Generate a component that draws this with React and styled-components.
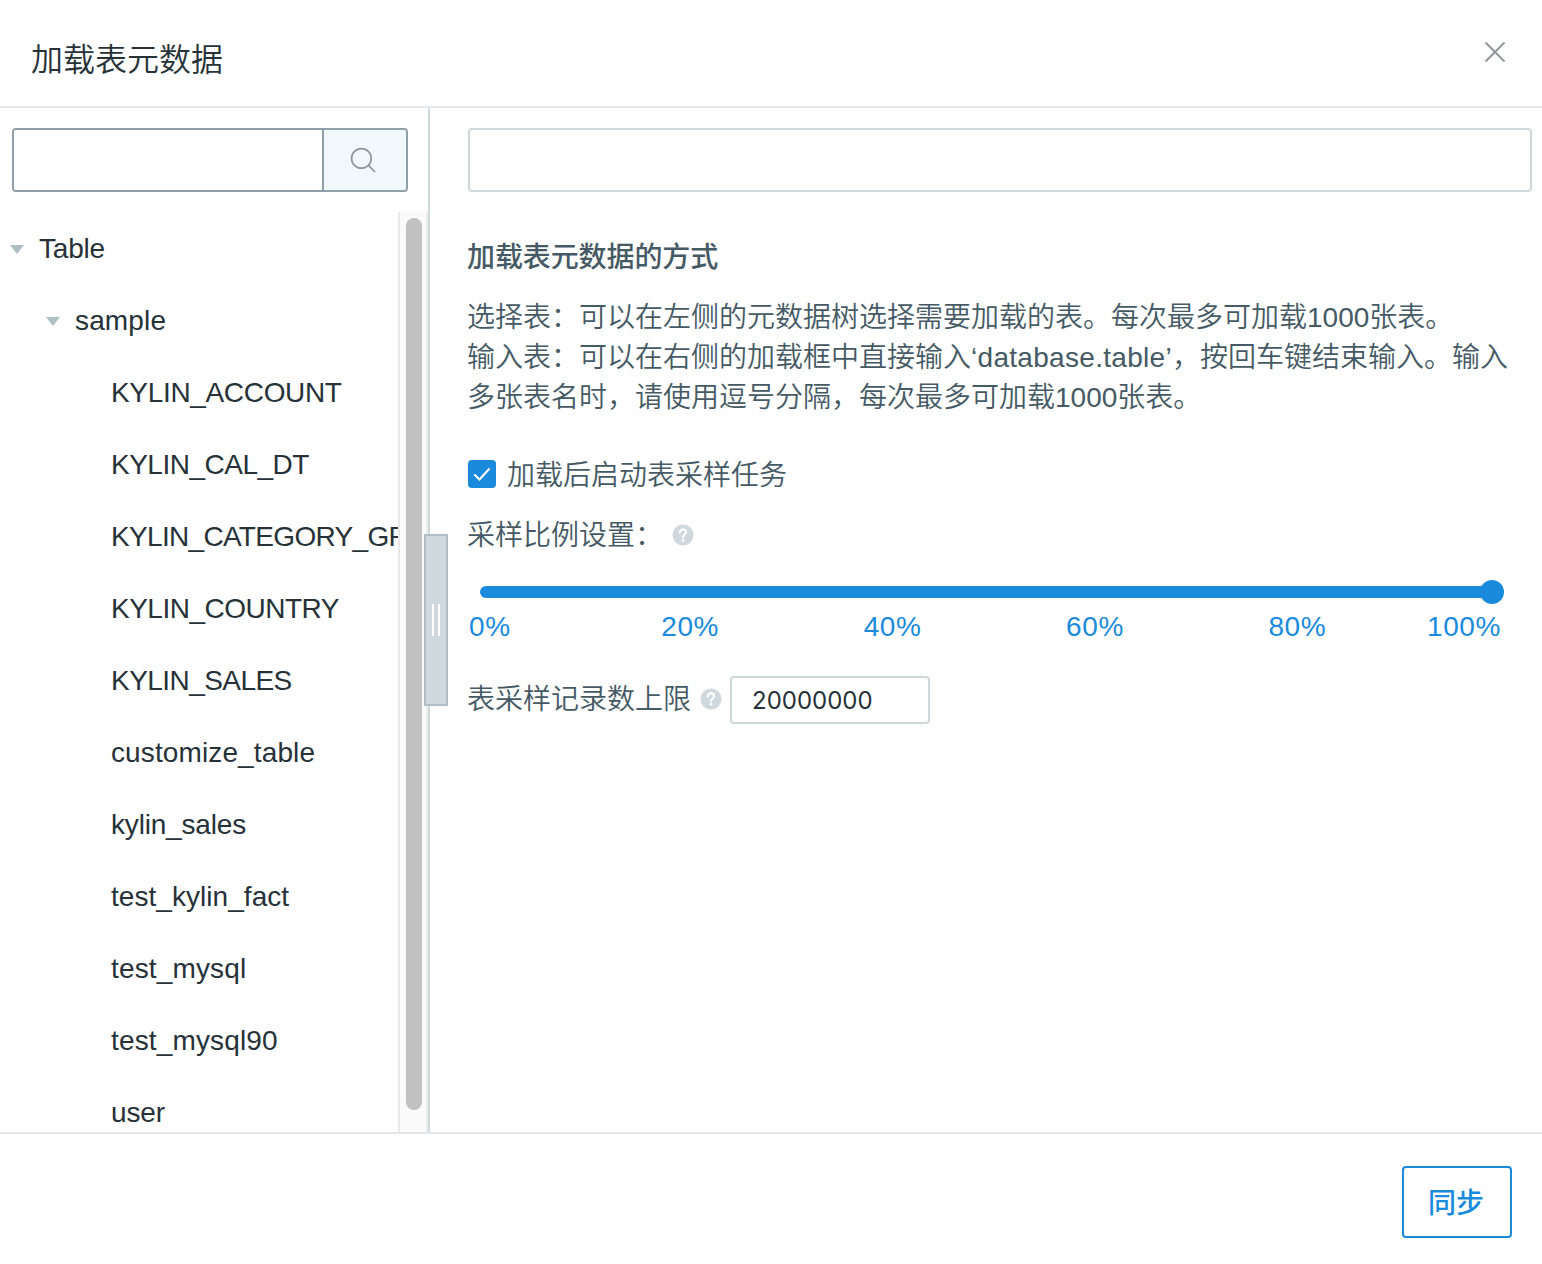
import React, { useState } from "react";
import styled, { createGlobalStyle } from "styled-components";

const BLUE = "#1a8bdc";

const GlobalStyle = createGlobalStyle`
  * { box-sizing: border-box; }
  body {
    margin: 0;
    background: #fefefe;
    color: #263238;
    font-family: "Liberation Sans", "Noto Sans CJK SC", sans-serif;
    font-size: 28px;
  }
  input, button { font: inherit; }
`;

const Dialog = styled.div`
  display: flex;
  flex-direction: column;
  width: 1542px;
  height: 1264px;
  overflow: hidden;
  background: #fefefe;
`;

const Header = styled.header`
  display: flex;
  align-items: center;
  justify-content: space-between;
  height: 108px;
  padding: 0 36px 0 31px;
  border-bottom: 2px solid #e4e9ed;
`;

const Title = styled.h1`
  margin: 13px 0 0;
  font-size: 32px;
  font-weight: 350;
  line-height: 48px;
`;

const CloseButton = styled.button`
  display: flex;
  margin: 0 0 2px;
  padding: 0;
  border: 0;
  background: none;
  color: #909399;
`;

const Body = styled.div`
  display: flex;
  height: 1024px;
`;

const Sidebar = styled.aside`
  position: relative;
  display: flex;
  flex-direction: column;
  flex: none;
  width: 430px;
  padding-top: 20px;
  border-right: 2px solid #cfd8dc;
`;

const SearchBox = styled.div`
  display: flex;
  flex: none;
  width: 396px;
  height: 64px;
  margin: 0 0 20px 12px;
  border: 2px solid #8e9fa8;
  border-radius: 4px;
  overflow: hidden;
`;

const SearchInput = styled.input`
  flex: 1;
  min-width: 0;
  padding: 0 20px;
  border: 0;
  outline: 0;
  background: #fff;
`;

const SearchButton = styled.button`
  display: flex;
  align-items: center;
  justify-content: center;
  width: 84px;
  padding: 0 4px 0 0;
  border: 0;
  border-left: 2px solid #8e9fa8;
  background: #f2f7fb;
  color: #919499;
`;

const TreeScroll = styled.div`
  display: flex;
  height: 920px;
`;

const Tree = styled.ul`
  flex: none;
  width: 398px;
  margin: 0;
  padding: 0;
  overflow: hidden;
  list-style: none;
`;

const TreeRow = styled.li`
  display: flex;
  align-items: center;
  height: 72px;
  padding: 2px 0 0 ${(p) => 10 + p.$level * 36}px;
  letter-spacing: ${(p) => p.$spacing || 0}px;
  line-height: 70px;
  white-space: nowrap;
`;

const Caret = styled.span`
  width: 14px;
  height: 0;
  margin: 0 15px 0 0;
  border: solid transparent;
  border-width: 9px 7px 0;
  border-top-color: ${(p) => (p.$leaf ? "transparent" : "#b0bec5")};
`;

const ScrollTrack = styled.div`
  width: 30px;
  padding: 6px 4px 0 6px;
  border: solid #e8e8e8;
  border-width: 0 2px;
  border-right-color: #ededed;
  background: #fafafa;
`;

const ScrollThumb = styled.div`
  width: 16px;
  height: 892px;
  border-radius: 8px;
  background: #c1c1c1;
`;

const Splitter = styled.div`
  position: absolute;
  top: 426px;
  right: -20px;
  display: flex;
  align-items: center;
  justify-content: center;
  gap: 4px;
  width: 24px;
  height: 172px;
  border: 2px solid #b0bec5;
  background: #cfd8dc;
`;

const Grip = styled.span`
  width: 2px;
  height: 32px;
  background: #fff;
`;

const Main = styled.main`
  flex: 1;
  min-width: 0;
  padding: 20px 10px 0 38px;
  color: #455a64;
  font-weight: 350;
`;

const TableInput = styled.input`
  display: block;
  width: 100%;
  height: 64px;
  padding: 0 20px;
  border: 2px solid #cfd8dc;
  border-radius: 4px;
  outline: 0;
  background: #fff;
`;

const Subtitle = styled.h2`
  margin: 46px 0 20px -1px;
  font-size: 28px;
  font-weight: 500;
  line-height: 40px;
  letter-spacing: -0.1px;
`;

const Help = styled.p`
  margin: 0 0 0 -1px;
  line-height: 40px;
  white-space: nowrap;
`;

const Latin = styled.span`
  letter-spacing: ${(p) => p.$spacing}px;
`;

const CheckRow = styled.label`
  display: flex;
  align-items: center;
  gap: 11px;
  height: 40px;
  margin-top: 36px;
`;

const LabelText = styled.span`
  margin-top: ${(p) => p.$drop}px;
  line-height: 36px;
`;

const Checkbox = styled.span`
  display: flex;
  align-items: center;
  justify-content: center;
  width: 28px;
  height: 28px;
  border-radius: 4px;
  background: ${BLUE};
`;

const FieldLabel = styled.div`
  display: flex;
  align-items: center;
  gap: 9px;
  height: 40px;
  margin-left: -1px;
`;

const RatioField = styled(FieldLabel)`
  margin-top: 21px;
`;

const Slider = styled.div`
  display: flex;
  align-items: center;
  height: 24px;
  margin: 25px 28px 0 12px;
`;

const Rail = styled.div`
  flex: 1;
  height: 12px;
  margin-right: -12px;
  border-radius: 6px;
  background: ${BLUE};
`;

const Knob = styled.div`
  width: 24px;
  height: 24px;
  border-radius: 50%;
  background: ${BLUE};
`;

const Marks = styled.div`
  display: grid;
  grid-template-columns: 120px repeat(4, 202.4px) 1fr;
  margin: 3px 31px 0 1px;
  color: ${BLUE};
  font-weight: 400;
  line-height: 40px;
  letter-spacing: 0.6px;
  text-align: center;
  white-space: nowrap;
`;

const Mark = styled.span`
  justify-self: ${(p) => p.$align || "center"};
`;

const LimitRow = styled.div`
  display: flex;
  align-items: center;
  gap: 8px;
  margin-top: 29px;
`;

const LimitField = styled(FieldLabel)`
  margin-bottom: 2px;
`;

const LimitInput = styled.input`
  width: 200px;
  height: 48px;
  padding: 0 20px;
  border: 2px solid #cfd8dc;
  border-radius: 4px;
  outline: 0;
  background: #fff;
  color: #263238;
  font-family: Inter, sans-serif;
  font-size: 24px;
  font-weight: 400;
`;

const Footer = styled.footer`
  display: flex;
  justify-content: flex-end;
  height: 132px;
  padding: 32px 30px 0;
  border-top: 2px solid #e0e6ec;
`;

const SyncButton = styled.button`
  width: 110px;
  height: 72px;
  padding: 0 2px 2px 0;
  border: 2px solid ${BLUE};
  border-radius: 4px;
  background: #fff;
  color: ${BLUE};
  font-weight: 500;
`;

const CloseIcon = () => (
  <svg width="22" height="22" viewBox="0 0 22 22" fill="none" stroke="currentColor" strokeWidth="1.8">
    <path d="M1.5 1.5 20.5 20.5M20.5 1.5 1.5 20.5" />
  </svg>
);

const SearchIcon = () => (
  <svg width="26" height="26" viewBox="0 0 26 26" fill="none" stroke="currentColor" strokeWidth="1.7">
    <circle cx="11.4" cy="11.4" r="9.8" />
    <path d="M18.2 18.2 25 25" />
  </svg>
);

const CheckIcon = () => (
  <svg width="28" height="28" viewBox="0 0 28 28" fill="none" stroke="#fff" strokeWidth="2">
    <path d="M6.3 14.5 11.5 19.5 21.5 8.5" />
  </svg>
);

const HelpIcon = () => (
  <svg width="22" height="22" viewBox="0 0 22 22" fill="none">
    <circle cx="11" cy="11" r="10.5" fill="#cfd8dc" />
    <path
      d="M7.9 8.5C7.9 6.6 9.2 5.4 11 5.4s3.1 1.2 3.1 2.9c0 2-3.1 2.4-3.1 4.5v.5"
      stroke="#fff"
      strokeWidth="2.2"
      strokeLinecap="round"
    />
    <circle cx="11" cy="16.3" r="1.4" fill="#fff" />
  </svg>
);

const treeItems = [
  { name: "Table", level: 0, spacing: -0.2 },
  { name: "sample", level: 1, spacing: 0.15 },
  { name: "KYLIN_ACCOUNT", level: 2, leaf: true, spacing: -0.33 },
  { name: "KYLIN_CAL_DT", level: 2, leaf: true, spacing: -0.5 },
  { name: "KYLIN_CATEGORY_GROUPINGS", level: 2, leaf: true, spacing: -0.68 },
  { name: "KYLIN_COUNTRY", level: 2, leaf: true, spacing: -0.5 },
  { name: "KYLIN_SALES", level: 2, leaf: true, spacing: -0.55 },
  { name: "customize_table", level: 2, leaf: true, spacing: 0.12 },
  { name: "kylin_sales", level: 2, leaf: true, spacing: -0.18 },
  { name: "test_kylin_fact", level: 2, leaf: true, spacing: 0.05 },
  { name: "test_mysql", level: 2, leaf: true, spacing: 0.15 },
  { name: "test_mysql90", level: 2, leaf: true, spacing: 0.15 },
  { name: "user", level: 2, leaf: true, spacing: -0.15 },
];

const marks = ["0%", "20%", "40%", "60%", "80%", "100%"];
const markAlign = { "0%": "start", "100%": "end" };

export default function App() {
  const [limit, setLimit] = useState("20000000");
  return (
    <>
      <GlobalStyle />
      <Dialog>
        <Header>
          <Title>加载表元数据</Title>
          <CloseButton aria-label="close"><CloseIcon /></CloseButton>
        </Header>
        <Body>
          <Sidebar>
            <SearchBox>
              <SearchInput />
              <SearchButton aria-label="search"><SearchIcon /></SearchButton>
            </SearchBox>
            <TreeScroll>
              <Tree>
                {treeItems.map((item) => (
                  <TreeRow key={item.name} $level={item.level} $spacing={item.spacing}>
                    <Caret $leaf={item.leaf} />
                    {item.name}
                  </TreeRow>
                ))}
              </Tree>
              <ScrollTrack><ScrollThumb /></ScrollTrack>
            </TreeScroll>
            <Splitter><Grip /><Grip /></Splitter>
          </Sidebar>
          <Main>
            <TableInput />
            <Subtitle>加载表元数据的方式</Subtitle>
            <Help>
              选择表：可以在左侧的元数据树选择需要加载的表。每次最多可加载1000张表。<br />
              输入表：可以在右侧的加载框中直接输入<Latin $spacing={0.3}>‘database.table’</Latin>，按回车键结束输入。输入<br />
              多张表名时，请使用逗号分隔，每次最多可加载1000张表。
            </Help>
            <CheckRow>
              <Checkbox><CheckIcon /></Checkbox>
              <LabelText $drop={4}>加载后启动表采样任务</LabelText>
            </CheckRow>
            <RatioField>
              <LabelText $drop={2}>采样比例设置：</LabelText>
              <HelpIcon />
            </RatioField>
            <Slider><Rail /><Knob /></Slider>
            <Marks>
              {marks.map((m) => <Mark key={m} $align={markAlign[m]}>{m}</Mark>)}
            </Marks>
            <LimitRow>
              <LimitField>
                <LabelText $drop={2}>表采样记录数上限</LabelText>
                <HelpIcon />
              </LimitField>
              <LimitInput value={limit} onChange={(e) => setLimit(e.target.value)} />
            </LimitRow>
          </Main>
        </Body>
        <Footer><SyncButton>同步</SyncButton></Footer>
      </Dialog>
    </>
  );
}
